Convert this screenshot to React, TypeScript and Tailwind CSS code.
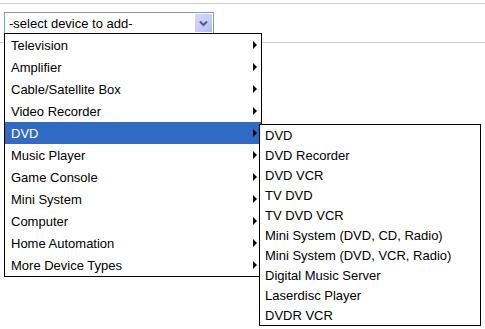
import React from "react";

const deviceTypes = [
  "Television",
  "Amplifier",
  "Cable/Satellite Box",
  "Video Recorder",
  "DVD",
  "Music Player",
  "Game Console",
  "Mini System",
  "Computer",
  "Home Automation",
  "More Device Types",
];

const dvdTypes = [
  "DVD",
  "DVD Recorder",
  "DVD VCR",
  "TV DVD",
  "TV DVD VCR",
  "Mini System (DVD, CD, Radio)",
  "Mini System (DVD, VCR, Radio)",
  "Digital Music Server",
  "Laserdisc Player",
  "DVDR VCR",
];

export default function App() {
  const active = "DVD";

  return (
    <div className="relative w-[485px] h-[329px] overflow-hidden bg-white text-[13px] text-black font-['Liberation_Sans',Arial,sans-serif]">
      <div className="mt-[3px] h-px bg-[#cccccc]" />

      {/* select box */}
      <div className="mt-[8px] ml-[4px] flex h-[22px] w-[210px] items-center border border-[#7f9db9] pl-[4px] pr-px">
        <span className="flex-1 leading-none">-select device to add-</span>
        <div className="flex h-[18px] w-[17px] items-center justify-center bg-[linear-gradient(135deg,#d6d9fb_0%,#c3c8f6_70%,#9fc0f0_100%)]">
          <svg width="9" height="7" viewBox="0 0 9 7">
            <path d="M1 1.5 L4.5 5 L8 1.5" fill="none" stroke="#4d5a8a" strokeWidth="2" />
          </svg>
        </div>
      </div>

      <div className="mt-[8px] h-px bg-[#cccccc]" />

      {/* main dropdown */}
      <div className="absolute left-[4px] top-[33px] w-[258px] border border-black bg-white">
        {deviceTypes.map((name) => (
          <div
            key={name}
            className={`flex h-[22px] items-center pl-[6px] pr-[4px] ${name === active ? "bg-[#316ac5] text-white" : ""}`}
          >
            <span className="flex-1 leading-none">{name}</span>
            <span className="h-0 w-0 border-y-[4px] border-l-[4px] border-y-transparent border-l-black" />
          </div>
        ))}
      </div>

      {/* submenu */}
      <div className="absolute left-[259px] top-[124px] w-[222px] border border-black bg-white">
        {dvdTypes.map((name) => (
          <div key={name} className="flex h-[20px] items-center pl-[5px]">
            <span className="leading-none">{name}</span>
          </div>
        ))}
      </div>
    </div>
  );
}
